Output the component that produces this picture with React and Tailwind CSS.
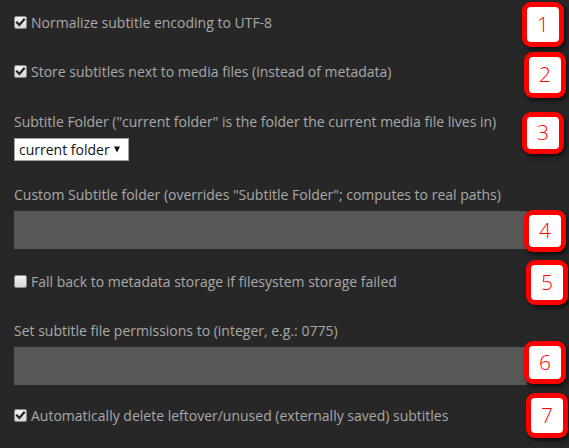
const font = { fontFamily: '"Open Sans", "Liberation Sans", sans-serif' }

function Check({ checked }) {
  return (
    <span className="w-[13px] h-[13px] rounded-[2px] border border-[#8a8a8a] bg-gradient-to-b from-[#f4f4f4] to-[#d6d6d6] flex items-center justify-center shrink-0">
      {checked && (
        <svg width="11" height="11" viewBox="0 0 11 11">
          <path d="M2 5.6 L4.4 8 L9 2.6" fill="none" stroke="#222" strokeWidth="2.2" strokeLinecap="square" />
        </svg>
      )}
    </span>
  )
}

function CheckRow({ checked, label }) {
  return (
    <div className="flex items-center h-[20px]">
      <Check checked={checked} />
      <span className="ml-[4px] text-[14px] text-[#a9a9a9]">{label}</span>
    </div>
  )
}

function Field({ label, children }) {
  return (
    <div className="flex flex-col gap-[7px]">
      <div className="h-[20px] flex items-center text-[14px] text-[#a9a9a9]">{label}</div>
      {children}
    </div>
  )
}

function TextBox() {
  return <div className="w-[513px] h-[38px] bg-[#575757]" />
}

function Badge({ n, className }) {
  return (
    <div className={`absolute w-[42px] bg-[#ff0000] rounded-[9px] p-[5px] shadow-[2px_3px_4px_rgba(0,0,0,0.6)] ${className}`}>
      <div className="w-full h-full bg-white rounded-[4px] flex items-center justify-center text-[#ff0000] text-[21px] font-light">
        {n}
      </div>
    </div>
  )
}

export default function App() {
  return (
    <div className="relative w-[569px] h-[448px] bg-[#272727] overflow-hidden" style={font}>
      <div className="px-[14px] pt-[12px] flex flex-col">
        <CheckRow checked label="Normalize subtitle encoding to UTF-8" />
        <div className="mt-[29px]">
          <CheckRow checked label="Store subtitles next to media files (instead of metadata)" />
        </div>
        <div className="mt-[30px]">
          <Field label={'Subtitle Folder ("current folder" is the folder the current media file lives in)'}>
            <div className="w-[115px] h-[23px] bg-white border border-[#a0a0a0] flex items-center justify-between pl-[4px] pr-[8px] text-[14px] text-[#111]">
              <span className="whitespace-nowrap">current folder</span>
              <svg width="6" height="7" viewBox="0 0 6 7" className="shrink-0">
                <path d="M0 0.5 L6 0.5 L3 6.5 Z" fill="#111" />
              </svg>
            </div>
          </Field>
        </div>
        <div className="mt-[23px]">
          <Field label={'Custom Subtitle folder (overrides "Subtitle Folder"; computes to real paths)'}>
            <TextBox />
          </Field>
        </div>
        <div className="mt-[22px]">
          <CheckRow label="Fall back to metadata storage if filesystem storage failed" />
        </div>
        <div className="mt-[29px]">
          <Field label="Set subtitle file permissions to (integer, e.g.: 0775)">
            <TextBox />
          </Field>
        </div>
        <div className="mt-[20px]">
          <CheckRow checked label="Automatically delete leftover/unused (externally saved) subtitles" />
        </div>
      </div>

      <Badge n="1" className="left-[522px] top-[2px] h-[45px]" />
      <Badge n="2" className="left-[524px] top-[52px] h-[46px]" />
      <Badge n="3" className="left-[522px] top-[112px] h-[42px]" />
      <Badge n="4" className="left-[524px] top-[210px] h-[42px]" />
      <Badge n="5" className="left-[526px] top-[260px] h-[45px]" />
      <Badge n="6" className="left-[524px] top-[341px] h-[43px]" />
      <Badge n="7" className="left-[526px] top-[393px] h-[45px]" />
    </div>
  )
}
